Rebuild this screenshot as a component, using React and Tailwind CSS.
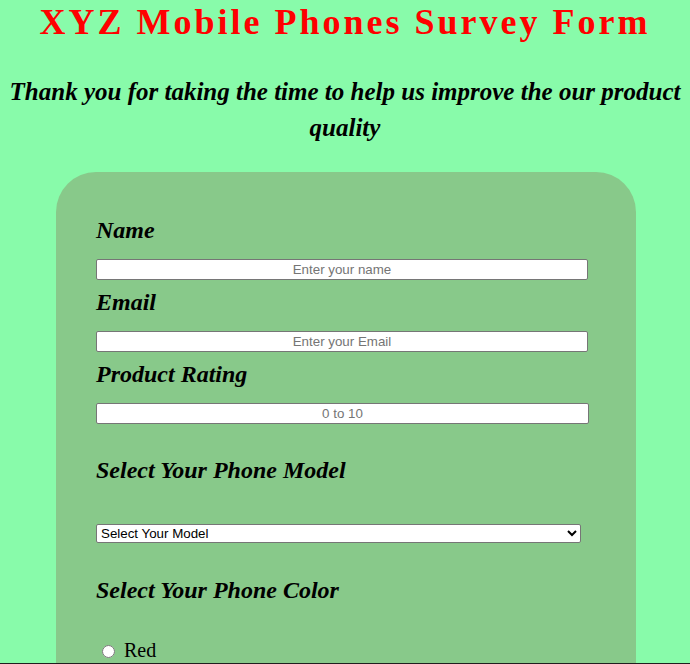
import React from "react";

const serif = { fontFamily: '"Liberation Serif", "Times New Roman", serif' };

const Label = ({ children }) => (
  <h3 className="text-[24px] leading-[28px] font-bold italic">{children}</h3>
);

const TextBox = ({ placeholder, className = "" }) => (
  <input
    type="text"
    placeholder={placeholder}
    className={
      "block h-[21px] bg-white border border-[#767676] rounded-[2px] px-[2px] text-center text-[13.33px] text-black placeholder:text-[#757575] font-['Liberation_Sans',Arial,sans-serif] " +
      className
    }
  />
);

export default function App() {
  return (
    <div className="min-h-screen bg-[#88fbaa] pb-10" style={serif}>
      <h1 className="text-center text-[36px] leading-[44px] font-bold tracking-[3px] text-[#ff0000]">
        XYZ Mobile Phones Survey Form
      </h1>
      <h2 className="mt-[30px] px-2 text-center text-[25px] leading-[36px] font-bold italic">
        Thank you for taking the time to help us improve the our product quality
      </h2>

      <form className="ml-[56px] mt-[26px] w-[580px] rounded-[40px] bg-[#88c98a] pt-[44px] pb-10 px-10">
        <Label>Name</Label>
        <TextBox placeholder="Enter your name" className="mt-[15px] w-[492px]" />

        <div className="mt-[8px]">
          <Label>Email</Label>
        </div>
        <TextBox placeholder="Enter your Email" className="mt-[15px] w-[492px]" />

        <div className="mt-[8px]">
          <Label>Product Rating</Label>
        </div>
        <TextBox placeholder="0 to 10" className="mt-[15px] w-[493px]" />

        <div className="mt-[32px]">
          <Label>Select Your Phone Model</Label>
        </div>
        <select className="mt-[40px] block h-[19px] w-[485px] bg-white border border-[#767676] rounded-[2px] text-[13.33px] leading-[15px] text-black font-['Liberation_Sans',Arial,sans-serif]">
          <option>Select Your Model</option>
          <option>Samsung Galaxy</option>
          <option>Apple iPhone</option>
          <option>OnePlus</option>
          <option>Xiaomi</option>
        </select>

        <div className="mt-[33px]">
          <Label>Select Your Phone Color</Label>
        </div>

        <div className="mt-[34px] flex flex-col gap-3 text-[20px] leading-[24px]">
          <label className="flex items-center">
            <input type="radio" name="color" className="ml-[6px] mr-[9px] mt-[2px] h-[13px] w-[13px]" />
            Red
          </label>
          <label className="flex items-center">
            <input type="radio" name="color" className="ml-[6px] mr-[9px] mt-[2px] h-[13px] w-[13px]" />
            Black
          </label>
          <label className="flex items-center">
            <input type="radio" name="color" className="ml-[6px] mr-[9px] mt-[2px] h-[13px] w-[13px]" />
            Blue
          </label>
        </div>
      </form>

      <div className="fixed bottom-0 left-0 right-0 h-px bg-[#1e1e1e]" />
    </div>
  );
}
